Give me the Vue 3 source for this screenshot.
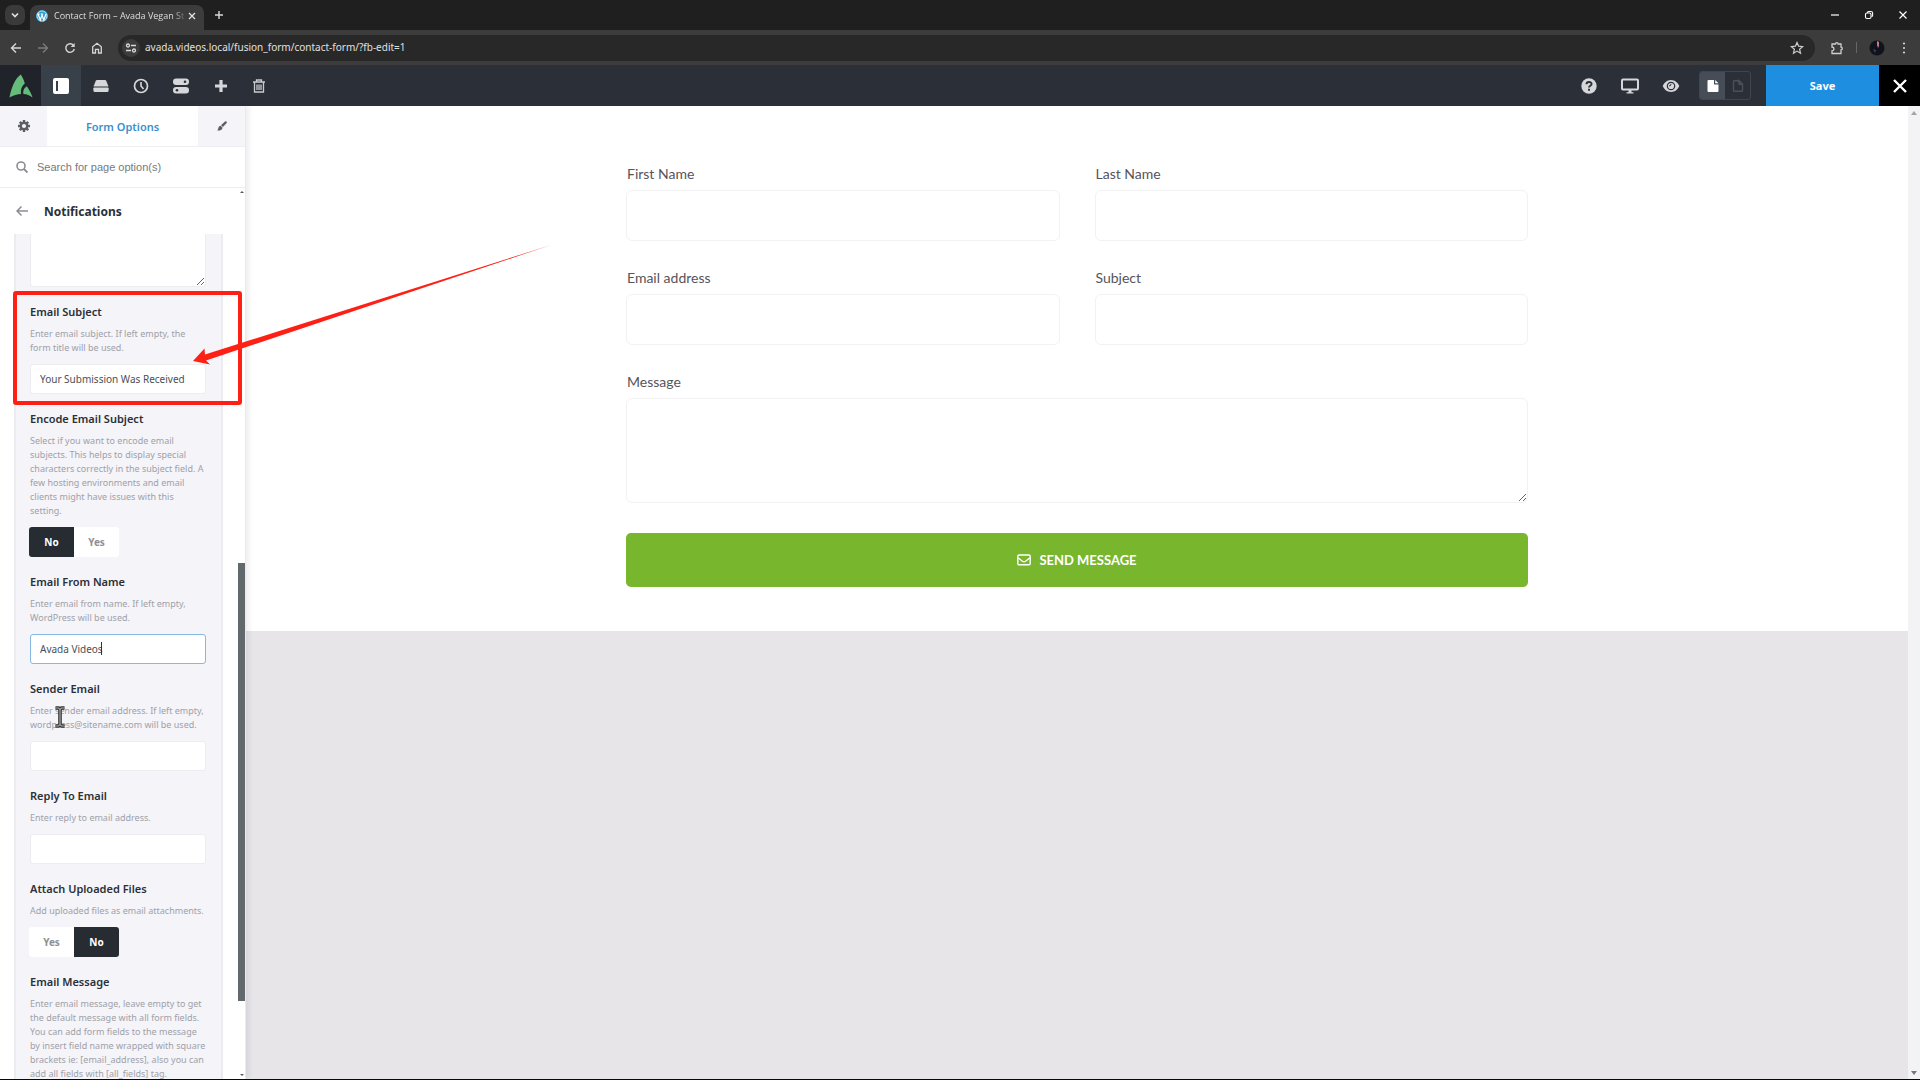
<script setup>
import { ref } from 'vue'

const fields = ref([
  {
    id: 'subject', title: 'Email Subject', type: 'text', value: 'Your Submission Was Received',
    lines: ['Enter email subject. If left empty, the', 'form title will be used.'],
  },
  {
    id: 'encode', title: 'Encode Email Subject', type: 'toggle', options: ['No', 'Yes'], value: 'No',
    lines: [
      'Select if you want to encode email', 'subjects. This helps to display special',
      'characters correctly in the subject field. A', 'few hosting environments and email',
      'clients might have issues with this', 'setting.',
    ],
  },
  {
    id: 'from', title: 'Email From Name', type: 'text', value: 'Avada Videos', focused: true,
    lines: ['Enter email from name. If left empty,', 'WordPress will be used.'],
  },
  {
    id: 'sender', title: 'Sender Email', type: 'text', value: '',
    lines: ['Enter sender email address. If left empty,', 'wordpress@sitename.com will be used.'],
  },
  {
    id: 'reply', title: 'Reply To Email', type: 'text', value: '',
    lines: ['Enter reply to email address.'],
  },
  {
    id: 'attach', title: 'Attach Uploaded Files', type: 'toggle', options: ['Yes', 'No'], value: 'No',
    lines: ['Add uploaded files as email attachments.'],
  },
  {
    id: 'message', title: 'Email Message', type: 'none',
    lines: [
      'Enter email message, leave empty to get', 'the default message with all form fields.',
      'You can add form fields to the message', 'by insert field name wrapped with square',
      'brackets ie: [email_address], also you can', 'add all fields with [all_fields] tag.',
    ],
  },
])

const contact = ['First Name', 'Last Name', 'Email address', 'Subject']
</script>

<template>
  <div class="page">
    <header class="tabs">
      <button class="tab-search" aria-label="Search tabs">
        <svg width="20" height="20" viewBox="0 0 20 20"><path d="M7 8.500l3 3 3-3" fill="none" stroke="#e3e3e3" stroke-width="1.600" /></svg>
      </button>
      <div class="tab">
        <svg width="12" height="12" viewBox="0 0 24 24">
          <circle cx="12" cy="12" r="12" fill="#2f9bd0" />
          <circle cx="12" cy="12" r="10" fill="none" stroke="#fff" stroke-width="1.300" />
          <path d="M4 8l4.600 12L12 10l3.500 10L20 8M3 8h4.500M9.500 8h5" fill="none" stroke="#fff" stroke-width="2.400" />
        </svg>
        <span class="tab-title">Contact Form – Avada Vegan St</span>
        <button class="plain" aria-label="Close tab">
          <svg width="8" height="8" viewBox="0 0 8 8"><path d="M1 1l6 6M7 1L1 7" stroke="#e3e3e3" stroke-width="1.300" /></svg>
        </button>
      </div>
      <button class="plain new-tab" aria-label="New tab">
        <svg width="8" height="8" viewBox="0 0 8 8"><path d="M4 0v8M0 4h8" stroke="#d8d8d8" stroke-width="1.400" /></svg>
      </button>
      <div class="window-buttons">
        <button class="plain" aria-label="Minimize"><svg width="10" height="10" viewBox="0 0 10 10"><path d="M1 5h8" stroke="#fff" stroke-width="1.200" /></svg></button>
        <button class="plain" aria-label="Restore"><svg width="10" height="10" viewBox="0 0 10 10" fill="none" stroke="#fff" stroke-width="1.100"><rect x="1.500" y="3" width="5.500" height="5.500" rx="1.500" /><path d="M3.500 3V2.500Q3.500 1.500 4.500 1.500H7Q8.600 1.500 8.600 3V5.500Q8.600 6.500 7.500 6.500" /></svg></button>
        <button class="plain" aria-label="Close window"><svg width="10" height="10" viewBox="0 0 10 10"><path d="M1.500 1.500l7 7M8.500 1.500l-7 7" stroke="#fff" stroke-width="1.200" /></svg></button>
      </div>
    </header>

    <nav class="browser-bar">
      <button class="plain" aria-label="Back"><svg width="12" height="12" viewBox="0 0 12 12"><path d="M11 6H2M6 1.500L1.500 6 6 10.500" fill="none" stroke="#d6d6d6" stroke-width="1.400" /></svg></button>
      <button class="plain" aria-label="Forward"><svg width="12" height="12" viewBox="0 0 12 12"><path d="M1 6h9M6 1.500L10.500 6 6 10.500" fill="none" stroke="#7b7b7b" stroke-width="1.400" /></svg></button>
      <button class="plain" aria-label="Reload"><svg width="12" height="12" viewBox="0 0 12 12"><path d="M9.800 3.800A4.300 4.300 0 1 0 10.300 7" fill="none" stroke="#d6d6d6" stroke-width="1.400" /><path d="M10.700 1v4H6.700z" fill="#d6d6d6" /></svg></button>
      <button class="plain" aria-label="Home"><svg width="12" height="12" viewBox="0 0 12 12"><path d="M1.700 11V4.800L6 1.300l4.300 3.500V11H7.500V7.300h-3V11z" fill="none" stroke="#d6d6d6" stroke-width="1.300" /></svg></button>
      <div class="address">
        <span class="site-info">
          <svg width="12" height="12" viewBox="0 0 12 12" fill="none" stroke="#d8d8d8" stroke-width="1.300"><circle cx="3" cy="3.500" r="1.500" /><path d="M6 3.500h5M1 8.500h5" /><circle cx="9" cy="8.500" r="1.500" /></svg>
        </span>
        <input class="url" aria-label="Address" value="avada.videos.local/fusion_form/contact-form/?fb-edit=1" />
        <svg width="14" height="14" viewBox="0 0 14 14"><path d="M7 1.500l1.600 3.700 4 .4-3 2.600.9 4L7 10.100l-3.500 2.100.9-4-3-2.600 4-.4z" fill="none" stroke="#cfcfcf" stroke-width="1.200" /></svg>
      </div>
      <div class="browser-tools">
        <svg width="14" height="14" viewBox="0 0 14 14"><path d="M2 3h3.500a1.300 1.300 0 0 1 2.600 0H11v3.200a1.300 1.300 0 0 1 0 2.600V12.500H2V9.800a1.900 1.900 0 0 0 0-3.800z" fill="none" stroke="#cfcfcf" stroke-width="1.300" /></svg>
        <span class="divider"></span>
        <svg width="16" height="16" viewBox="0 0 16 16"><circle cx="8" cy="8" r="7.500" fill="#11131c" /><path d="M8 1l2 1v4l-1 2-1-3z" fill="#bb7f85" /><path d="M4 9l3 1-1 3z" fill="#3c4260" /></svg>
        <svg class="more" width="4" height="14" viewBox="0 0 4 14" fill="#d0d0d0"><circle cx="2" cy="2.500" r="1.100" /><circle cx="2" cy="7" r="1.100" /><circle cx="2" cy="11.500" r="1.100" /></svg>
      </div>
    </nav>

    <div class="builder-bar">
      <a class="logo" href="#" aria-label="Avada">
        <svg width="24" height="24" viewBox="0 0 24 24" fill="#65bc7b"><path d="M11.700.5C5.500 5 2 15 .5 23.500 4.500 21.300 8.500 20.300 12 20 11.300 15.500 12.800 12 15.800 9.500 15 6 13.500 3 11.700.5z" /><path d="M17.800 12.300c2.200 3 4.400 7 5.700 11.200-3-2.200-5.500-3.200-9-3.500-.8-3 .8-6.200 3.300-7.700z" /></svg>
      </a>
      <button class="tool active" aria-label="Toggle sidebar"><svg width="16" height="16" viewBox="0 0 16 16"><rect width="16" height="16" rx="2" fill="#fff" /><rect x="3" y="3" width="2" height="10" fill="#384049" /></svg></button>
      <button class="tool" aria-label="Library"><svg width="16" height="16" viewBox="0 0 16 16" fill="#d5d7da"><path d="M4 2h8q.8 0 1.200.8L15.500 8.500H.5l2.300-5.700Q3.200 2 4 2z" /><path d="M1.200 9.500h13.600q.8 0 .8.800v2.200q0 1.500-1.500 1.500H1.900Q.4 14 .4 12.500V10.300q0-.8.800-.8z" /></svg></button>
      <button class="tool" aria-label="History"><svg width="16" height="16" viewBox="0 0 16 16" fill="none" stroke="#d5d7da"><circle cx="8" cy="8" r="6.500" stroke-width="1.700" /><path d="M8 4v4l2.500 3" stroke-width="1.600" /></svg></button>
      <button class="tool" aria-label="Preferences"><svg width="16" height="16" viewBox="0 0 16 16"><rect y="0.500" width="16" height="6.500" rx="3.200" fill="#d5d7da" /><rect y="9" width="16" height="6.500" rx="3.200" fill="#d5d7da" /><circle cx="12" cy="3.700" r="1.300" fill="#2b3038" /><circle cx="4" cy="12.200" r="1.300" fill="#2b3038" /></svg></button>
      <button class="tool" aria-label="Add"><svg width="12" height="12" viewBox="0 0 12 12"><path d="M6 0v12M0 6h12" stroke="#d5d7da" stroke-width="3.200" /></svg></button>
      <button class="tool narrow" aria-label="Delete"><svg width="14" height="14" viewBox="0 0 14 14" fill="none" stroke="#c9cbcf" stroke-width="1.300"><path d="M1 3h12M4.500 3V1h5v2M2.500 3v10h9V3M5 5.500v5.500M7 5.500v5.500M9 5.500v5.500" /></svg></button>
      <div class="spacer"></div>
      <button class="tool wider" aria-label="Help"><svg width="16" height="16" viewBox="0 0 16 16"><circle cx="8" cy="8" r="7.700" fill="#d5d7da" /><path d="M5.500 6.300C5.500 3.200 10.600 3.300 10.600 6 10.600 7.800 8 7.800 8 9.600M8 10.800v2" fill="none" stroke="#2b3038" stroke-width="1.900" /></svg></button>
      <button class="tool wider" aria-label="Device preview"><svg width="18" height="16" viewBox="0 0 18 16"><rect x="1" y="1.500" width="16" height="10" rx="1" fill="none" stroke="#d5d7da" stroke-width="2" /><path d="M7.500 12h3v2.200h2v1.300h-7v-1.300h2z" fill="#d5d7da" /></svg></button>
      <button class="tool wider" aria-label="Preview"><svg width="18" height="14" viewBox="0 0 18 14"><path d="M9 1C13 1 16 4 17.300 7 16 10 13 13 9 13S2 10 .7 7C2 4 5 1 9 1z" fill="#d5d7da" /><circle cx="9" cy="7" r="3.700" fill="none" stroke="#2b3038" stroke-width="1.200" /><path d="M7 7a2 2 0 0 0 2-2" fill="none" stroke="#2b3038" /></svg></button>
      <div class="views">
        <button class="view on" aria-label="Form view"><svg width="12" height="14" viewBox="0 0 12 14"><path d="M2 1h5v4.500h4.500V12q0 1-1 1H1.500q-1 0-1-1V2q0-1 1-1zM8.200 1l3.300 3.300H8.200z" fill="#fff" /></svg></button>
        <button class="view" aria-label="Page view"><svg width="12" height="14" viewBox="0 0 12 14"><path d="M7 1.700H2q-.5 0-.5.500v9.600q0 .5.500.5h8q.5 0 .5-.5V5L7 1.700V5.300h3.500" fill="none" stroke="#4a5058" stroke-width="1.400" /></svg></button>
      </div>
      <button class="save">Save</button>
      <button class="close" aria-label="Close editor"><svg width="14" height="14" viewBox="0 0 14 14"><path d="M1 1l12 12M13 1L1 13" stroke="#fff" stroke-width="2.400" /></svg></button>
    </div>

    <div class="workspace">
      <aside class="sidebar">
        <div class="side-tabs">
          <button class="side-tab" aria-label="Settings"><svg width="12" height="12" viewBox="0 0 12 12"><path d="M6 0v12M0 6h12M1.800 1.800l8.400 8.400M10.200 1.800l-8.400 8.400" stroke="#5b5e63" stroke-width="2.500" /><circle cx="6" cy="6" r="3.200" fill="#f4f4f9" stroke="#5b5e63" stroke-width="2.300" /></svg></button>
          <button class="side-tab current">Form Options</button>
          <button class="side-tab" aria-label="Styling"><svg width="10" height="10" viewBox="0 0 10 10" fill="#5b5e63"><path d="M8 .4Q9.300-.2 9.800.7 10 1.500 9.400 2.200L6 6 4 4.200z" /><path d="M3.500 4.700l2 1.900Q5.500 9 2.600 9.400 1 9.700.2 9.200 1.200 8.500 1.300 7.200 1.500 4.800 3.500 4.700z" /></svg></button>
        </div>
        <div class="search">
          <svg width="12" height="12" viewBox="0 0 12 12" fill="none" stroke="#8b8d92"><circle cx="5" cy="5" r="4" stroke-width="1.600" /><path d="M8 8l3.500 3.500" stroke-width="1.900" /></svg>
          <input aria-label="Search options" placeholder="Search for page option(s)" />
        </div>
        <div class="side-title">
          <button class="plain" aria-label="Back to options"><svg width="12" height="12" viewBox="0 0 12 12"><path d="M12 6H1.500M5.500 1.500L1 6l4.500 4.500" fill="none" stroke="#8b8d92" stroke-width="1.500" /></svg></button>
          <h1>Notifications</h1>
        </div>
        <div class="side-body">
          <form class="panel" @submit.prevent>
            <textarea class="recipients" aria-label="Notification recipients"></textarea>
            <section v-for="f in fields" :key="f.id" class="field">
              <label v-if="f.type === 'text'" class="title" :for="f.id">{{ f.title }}</label>
              <h2 v-else class="title">{{ f.title }}</h2>
              <p><span v-for="line in f.lines" :key="line">{{ line }}</span></p>
              <div v-if="f.type === 'text'" class="input-wrap">
                <input :id="f.id" v-model="f.value" type="text" :class="{ focused: f.focused }" />
                <i v-if="f.focused" class="caret"></i>
              </div>
              <div v-else-if="f.type === 'toggle'" class="toggle" role="group" :aria-label="f.title">
                <button v-for="o in f.options" :key="o" type="button" :class="{ on: o === f.value }" @click="f.value = o">{{ o }}</button>
              </div>
            </section>
          </form>
        </div>
        <div class="side-scroll">
          <svg width="6" height="4" viewBox="0 0 6 4"><path d="M3 1l2 2H1z" fill="#55585c" /></svg>
          <div class="track"><div class="thumb"></div></div>
          <svg width="6" height="4" viewBox="0 0 6 4"><path d="M3 3l2-2H1z" fill="#55585c" /></svg>
        </div>
      </aside>

      <main class="preview">
        <div class="canvas">
          <form class="contact" @submit.prevent>
            <div v-for="c in contact" :key="c" class="entry">
              <label :for="c">{{ c }}</label>
              <input :id="c" type="text" />
            </div>
            <div class="entry wide">
              <label for="body">Message</label>
              <textarea id="body"></textarea>
            </div>
            <button class="send wide">
              <svg width="14" height="12" viewBox="0 0 14 12" fill="none" stroke="#fff" stroke-width="1.400"><rect x="0.800" y="1" width="12.400" height="9.800" rx="1.200" /><path d="M1 3.800l4.500 3.500q1.500 1.100 3 0L13 3.800" /></svg>
              SEND MESSAGE
            </button>
          </form>
        </div>
      </main>
      <div class="page-scroll">
        <svg width="6" height="4" viewBox="0 0 6 4"><path d="M3 0l3 4H0z" fill="#a4a4a4" /></svg>
        <svg width="6" height="4" viewBox="0 0 6 4"><path d="M3 4l3-4H0z" fill="#777" /></svg>
      </div>

      <svg class="annotation" width="560" height="320" viewBox="0 0 560 320">
        <rect x="15" y="187" width="225" height="110" rx="1" fill="none" stroke="#ff2015" stroke-width="4" />
        <path d="M551 139L205 248.500 204.500 242.500 193 255 210 258.500 206 254.500z" fill="#ff2015" />
      </svg>
      <svg class="cursor" width="12" height="22" viewBox="0 0 12 22"><path d="M1.500 2H4.500L6 3.500 7.500 2h3M6 3.500v15M1.500 20H4.500L6 18.500 7.500 20h3" fill="none" stroke="#333" stroke-width="3.600" /><path d="M2 2H4.500L6 3.500 7.500 2H10M6 3.500v15M2 20H4.500L6 18.500 7.500 20H10" fill="none" stroke="#aaa" stroke-width="1.200" /></svg>
    </div>
  </div>
</template>

<style>
body { margin: 0; background: #08080a; }
</style>

<style scoped>
* { box-sizing: border-box; }
.page {
  height: 100vh;
  display: flex;
  flex-direction: column;
  border-bottom: 1px solid #08080a;
  overflow: hidden;
  font-family: "Noto Sans", "Open Sans", sans-serif;
}
button { font-family: inherit; border: 0; padding: 0; margin: 0; display: flex; align-items: center; justify-content: center; cursor: pointer; }
input, textarea { font-family: inherit; margin: 0; outline: 0; min-width: 0; }
svg { display: block; flex: none; }
.plain { background: none; }

.tabs { height: 30px; flex: none; display: flex; align-items: center; background: #1f1f1f; }
.tab-search { width: 20px; height: 20px; margin-left: 5px; border-radius: 7px; background: #3a3a3a; }
.tab { width: 174px; height: 25px; align-self: flex-end; margin-left: 5px; padding: 0 8px 3px 6px; display: flex; align-items: center; background: #3c3c3c; border-radius: 8px 8px 0 0; }
.tab-title { flex: 1; margin-left: 6px; white-space: nowrap; color: #dedede; font: 9px/16px "Open Sans", sans-serif; mask-image: linear-gradient(90deg, #000 88%, transparent); }
.new-tab { margin-left: 11px; }
.window-buttons { margin-left: auto; display: flex; gap: 24px; padding-right: 12px; }

.browser-bar { height: 35px; flex: none; display: flex; align-items: center; gap: 15px; padding: 0 14px 0 10px; background: #3c3c3c; }
.address { flex: 1; height: 26px; padding: 0 11px 0 4px; display: flex; align-items: center; border-radius: 13px; background: #282828; }
.site-info { width: 18px; height: 18px; border-radius: 9px; background: #3c3c3c; display: flex; align-items: center; justify-content: center; }
.url { flex: 1; margin-left: 5px; padding: 0 0 2px; border: 0; background: none; color: #e0e0e0; font-size: 10px; }
.browser-tools { display: flex; align-items: center; gap: 12px; }
.more { margin-left: 5px; }
.divider { width: 1px; height: 11px; background: #666; }

.builder-bar { height: 41px; flex: none; display: flex; background: #2b3038; }
.logo { width: 41px; display: flex; align-items: center; justify-content: center; background: #20242a; }
.tool { width: 40px; background: none; }
.tool.active { background: #384049; }
.tool.narrow { width: 35px; }
.tool.wider { width: 41px; }
.spacer { flex: 1; }
.views { display: flex; align-self: center; height: 29px; margin: 0 15px 0 8px; border: 1px solid #3f464e; border-radius: 3px; overflow: hidden; }
.view { width: 25px; background: none; }
.view.on { background: #464d56; }
.save { width: 113px; background: #1e8fe0; color: #fff; font-size: 11px; font-weight: 700; }
.close { width: 41px; background: #000; }

.workspace { position: relative; flex: 1; min-height: 0; display: flex; background: #fff; }
.sidebar { position: relative; z-index: 1; width: 246px; flex: none; display: flex; flex-direction: column; background: #fff; border-right: 1px solid #ebe9f0; box-shadow: 2px 0 6px rgba(40, 30, 60, 0.1); }
.side-tabs { height: 41px; flex: none; display: flex; border-bottom: 1px solid #eeeef2; }
.side-tab { width: 47px; background: #f4f4f9; }
.side-tab.current { flex: 1; background: #fff; color: #3c8fcb; font-size: 11px; font-weight: 600; }
.search { height: 41px; flex: none; display: flex; align-items: center; padding: 0 16px; gap: 9px; border-bottom: 1px solid #eeeef2; }
.search input { flex: 1; padding: 0; border: 0; font: 11px "Liberation Sans", sans-serif; }
.search input::placeholder { color: #77797d; }
.side-title { height: 46px; flex: none; display: flex; align-items: center; gap: 16px; padding: 0 16px; }
h1 { margin: 0; color: #2b3038; font-size: 12px; font-weight: 700; }
.side-body { flex: 1; min-height: 0; overflow: hidden; padding: 0 22px 0 14px; }
.panel { padding: 0 15px 0 14px; background: #f4f4f9; border: solid #ebebf0; border-width: 0 2px; }
.recipients { display: block; width: 176px; height: 53px; border: 1px solid #ececf1; border-top: 0; border-radius: 0 0 3px 3px; background: #fff; }
.field { padding-top: 16px; }
.title { display: block; margin: 0 0 6px; color: #2b3038; font-size: 11px; line-height: 18px; font-weight: 600; }
.field p { margin: 0 0 9px; color: #a0a1a8; font-size: 9px; line-height: 14px; white-space: nowrap; }
.field p span { display: block; }
.input-wrap { position: relative; height: 30px; }
.input-wrap input { width: 176px; height: 30px; padding: 0 9px; border: 1px solid #ececf1; border-radius: 3px; background: #fff; color: #4b4e54; font-size: 10px; }
.input-wrap input.focused { border-color: #86b9e2; }
.caret { position: absolute; left: 71px; top: 8px; width: 1px; height: 13px; background: #333; }
.toggle { display: flex; width: 90px; height: 30px; margin-left: -1px; border-radius: 3px; overflow: hidden; }
.toggle button { flex: 1; background: #fff; color: #8f9096; font-size: 10px; font-weight: 700; }
.toggle .on { background: #262c32; color: #fff; }
.side-scroll { position: absolute; right: 0; top: 82px; bottom: 0; width: 7px; padding: 2px 0; display: flex; flex-direction: column; align-items: center; }
.track { flex: 1; width: 100%; padding-top: 369px; }
.thumb { height: 438px; background: #62696d; }

.preview { flex: 1; min-width: 0; background: #e7e5e8; }
.canvas { padding: 58px 24px 44px; background: #fff; }
.contact { max-width: 902px; margin: 0 auto; display: grid; grid-template-columns: 1fr 1fr; column-gap: 35px; row-gap: 30px; }
.wide { grid-column: 1 / -1; }
.entry label { display: block; margin-bottom: 6px; padding-left: 1px; color: #56545a; font: 14px/20px Lato, sans-serif; }
.entry input, .entry textarea { display: block; width: 100%; padding: 0 16px; border: 1px solid #f2f2f3; border-radius: 6px; background: #fff; }
.entry input { height: 51px; margin-bottom: -3px; }
.entry textarea { height: 105px; }
.send { height: 54px; gap: 8px; border-radius: 5px; background: #78b62d; color: #fff; font: 700 13px Lato, sans-serif; }
.page-scroll { width: 12px; flex: none; padding: 5px 0 4px; display: flex; flex-direction: column; justify-content: space-between; align-items: center; background: #f3f3f5; }

.annotation { position: absolute; left: 0; top: 0; z-index: 2; pointer-events: none; }
.cursor { position: absolute; left: 54px; top: 600px; z-index: 3; pointer-events: none; }
</style>
